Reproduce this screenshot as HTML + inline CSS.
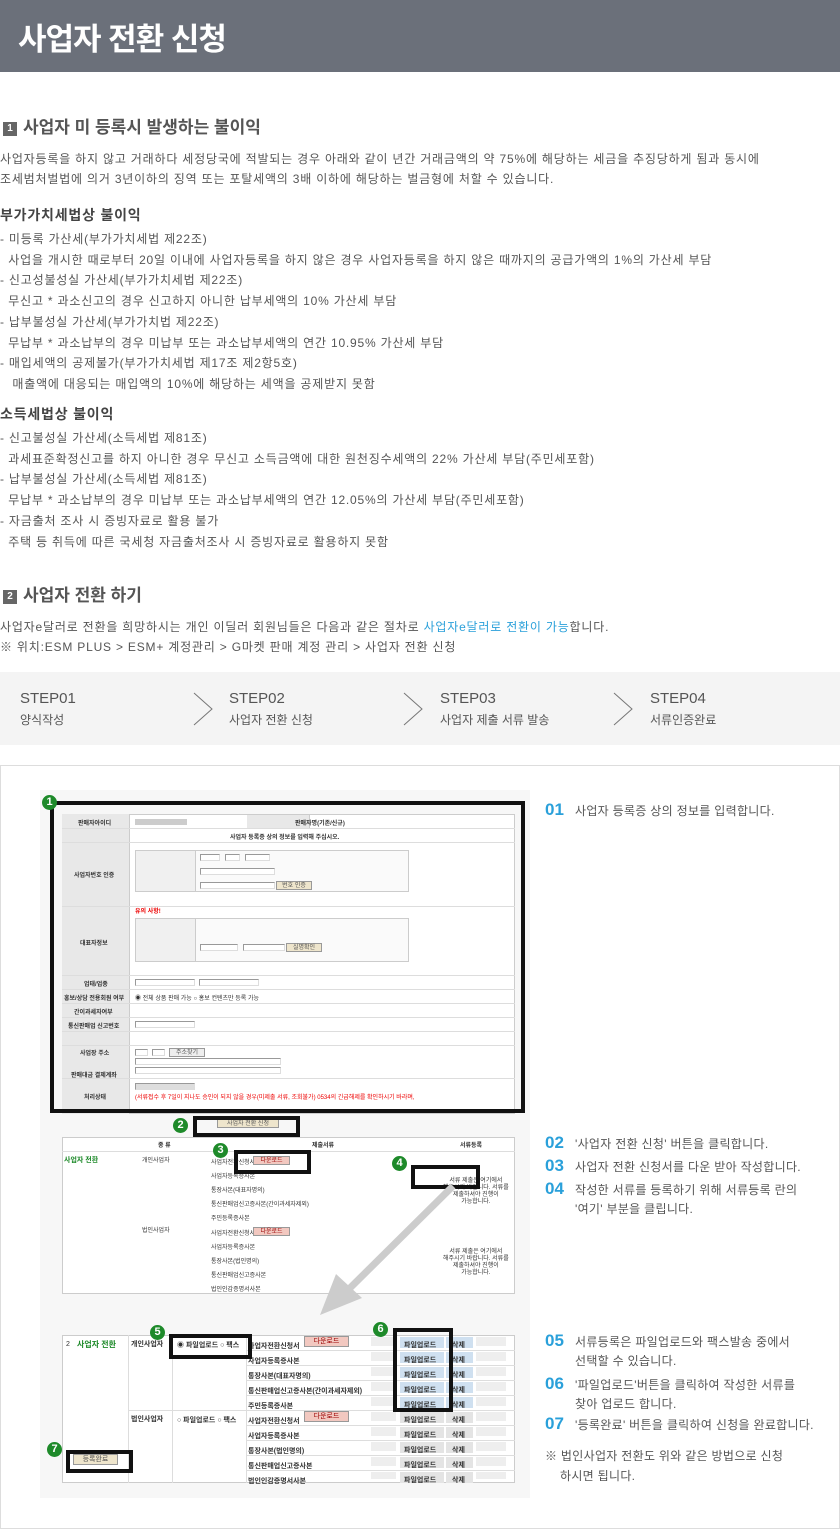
<!DOCTYPE html>
<html><head><meta charset="utf-8"><style>
*{margin:0;padding:0;box-sizing:border-box}
body{width:840px;height:1529px;position:relative;background:#fff;font-family:"Liberation Sans","Noto Sans CJK KR",sans-serif;color:#555;font-size:12px;overflow:hidden}
.a{position:absolute;white-space:nowrap}
.t{letter-spacing:.8px}
.hd{left:0;top:0;width:840px;height:72px;background:#6b707a}
.hd span{position:absolute;left:18px;top:14px;font-size:31px;font-weight:bold;color:#fff;letter-spacing:-1px}
.h2{font-size:17px;font-weight:bold;color:#555}
.num{display:inline-block;width:14px;height:14px;background:#666;color:#fff;font-size:10px;text-align:center;line-height:14px;margin-right:6px;vertical-align:2px}
.h3{font-size:14px;font-weight:bold;color:#444;letter-spacing:.8px}
.steps{left:0;top:672px;width:840px;height:73px;background:#f4f4f4}
.st{position:absolute;top:18px;color:#555}
.st b{display:block;font-weight:normal;font-size:15px;color:#555;margin-bottom:4px}
.chev{position:absolute;top:20px;width:20px;height:34px}
.box{left:0;top:765px;width:840px;height:764px;border:1px solid #ddd}
.img{left:40px;top:790px;width:490px;height:708px;background:#f7f7f7}
.bx{position:absolute;border:4px solid #111}
.circ{position:absolute;width:15px;height:15px;border-radius:50%;background:#1e8a2a;color:#fff;font-size:11px;font-weight:bold;text-align:center;line-height:15px}
.tb{position:absolute;background:#fff;border:1px solid #ccc}
.gr{position:absolute;background:#e8e8e8;border-right:1px solid #ccc}
.ln{position:absolute;height:1px;background:#ddd}
.sm{position:absolute;font-size:6px;color:#333;white-space:nowrap}
.rt{position:absolute;font-size:12px;color:#555;white-space:nowrap;letter-spacing:.3px}
.rt b{color:#2aa0da;font-size:17px;font-weight:bold;display:inline-block;width:30px;letter-spacing:0}
.btn{position:absolute;height:9px;border:1px solid #999;font-size:6px;text-align:center;line-height:8px}
.in{position:absolute;height:7px;border:1px solid #999;border-right-color:#ddd;border-bottom-color:#ddd;background:#fff}
</style></head><body>
<div class="a hd"><span>사업자 전환 신청</span></div>

<div class="a h2" style="left:3px;top:113px"><span class="num">1</span>사업자 미 등록시 발생하는 불이익</div>
<div class="a t" style="left:0;top:150px">사업자등록을 하지 않고 거래하다 세정당국에 적발되는 경우 아래와 같이 년간 거래금액의 약 75%에 해당하는 세금을 추징당하게 됨과 동시에</div>
<div class="a t" style="left:0;top:170px">조세범처벌법에 의거 3년이하의 징역 또는 포탈세액의 3배 이하에 해당하는 벌금형에 처할 수 있습니다.</div>

<div class="a h3" style="left:0;top:205px">부가가치세법상 불이익</div>
<div class="a t" style="left:0;top:229px;line-height:20.7px">- 미등록 가산세(부가가치세법 제22조)<br>&nbsp; 사업을 개시한 때로부터 20일 이내에 사업자등록을 하지 않은 경우 사업자등록을 하지 않은 때까지의 공급가액의 1%의 가산세 부담<br>- 신고성불성실 가산세(부가가치세법 제22조)<br>&nbsp; 무신고 * 과소신고의 경우 신고하지 아니한 납부세액의 10% 가산세 부담<br>- 납부불성실 가산세(부가가치법 제22조)<br>&nbsp; 무납부 * 과소납부의 경우 미납부 또는 과소납부세액의 연간 10.95% 가산세 부담<br>- 매입세액의 공제불가(부가가치세법 제17조 제2항5호)<br>&nbsp;&nbsp; 매출액에 대응되는 매입액의 10%에 해당하는 세액을 공제받지 못함</div>

<div class="a h3" style="left:0;top:404px">소득세법상 불이익</div>
<div class="a t" style="left:0;top:428px;line-height:20.7px">- 신고불성실 가산세(소득세법 제81조)<br>&nbsp; 과세표준확정신고를 하지 아니한 경우 무신고 소득금액에 대한 원천징수세액의 22% 가산세 부담(주민세포함)<br>- 납부불성실 가산세(소득세법 제81조)<br>&nbsp; 무납부 * 과소납부의 경우 미납부 또는 과소납부세액의 연간 12.05%의 가산세 부담(주민세포함)<br>- 자금출처 조사 시 증빙자료로 활용 불가<br>&nbsp; 주택 등 취득에 따른 국세청 자금출처조사 시 증빙자료로 활용하지 못함</div>

<div class="a h2" style="left:3px;top:581px"><span class="num">2</span>사업자 전환 하기</div>
<div class="a t" style="left:0;top:618px">사업자e달러로 전환을 희망하시는 개인 이딜러 회원님들은 다음과 같은 절차로 <span style="color:#2aa0da">사업자e달러로 전환이 가능</span>합니다.</div>
<div class="a t" style="left:0;top:638px">※ 위치:ESM PLUS &gt; ESM+ 계정관리 &gt; G마켓 판매 계정 관리 &gt; 사업자 전환 신청</div>

<div class="a steps">
<div class="st" style="left:20px"><b>STEP01</b>양식작성</div>
<svg class="chev" style="left:193px" viewBox="0 0 20 34"><path d="M1 1 L19 17 L1 33" fill="none" stroke="#777" stroke-width="1"/></svg>
<div class="st" style="left:229px"><b>STEP02</b>사업자 전환 신청</div>
<svg class="chev" style="left:403px" viewBox="0 0 20 34"><path d="M1 1 L19 17 L1 33" fill="none" stroke="#777" stroke-width="1"/></svg>
<div class="st" style="left:440px"><b>STEP03</b>사업자 제출 서류 발송</div>
<svg class="chev" style="left:613px" viewBox="0 0 20 34"><path d="M1 1 L19 17 L1 33" fill="none" stroke="#777" stroke-width="1"/></svg>
<div class="st" style="left:650px"><b>STEP04</b>서류인증완료</div>
</div>

<div class="a box"></div>
<div class="a img">
 <!-- form 1 -->
 <div class="tb" style="left:22px;top:24px;width:453px;height:300px"></div>
 <div class="gr" style="left:22px;top:24px;width:68px;height:300px"></div>
 <div class="gr" style="left:207px;top:25px;width:63px;height:13px"></div>
 <div class="ln" style="left:22px;top:38px;width:453px"></div>
 <div class="ln" style="left:22px;top:52px;width:453px"></div>
 <div class="ln" style="left:22px;top:116px;width:453px"></div>
 <div class="ln" style="left:22px;top:185px;width:453px"></div>
 <div class="ln" style="left:22px;top:199px;width:453px"></div>
 <div class="ln" style="left:22px;top:213px;width:453px"></div>
 <div class="ln" style="left:22px;top:227px;width:453px"></div>
 <div class="ln" style="left:22px;top:241px;width:453px"></div>
 <div class="ln" style="left:22px;top:255px;width:453px"></div>
 <div class="ln" style="left:22px;top:288px;width:453px"></div>
 <div class="tb" style="left:95px;top:60px;width:274px;height:42px;background:#fafafa"></div>
 <div class="gr" style="left:96px;top:61px;width:60px;height:40px;background:#f0f0f0"></div>
 <div class="tb" style="left:95px;top:128px;width:274px;height:44px;background:#fafafa"></div>
 <div class="gr" style="left:96px;top:129px;width:60px;height:42px;background:#f0f0f0"></div>
 <div class="in" style="left:160px;top:64px;width:20px"></div><div class="in" style="left:185px;top:64px;width:15px"></div><div class="in" style="left:205px;top:64px;width:25px"></div>
 <div class="in" style="left:160px;top:78px;width:75px"></div><div class="in" style="left:160px;top:92px;width:75px"></div>
 <div class="btn" style="left:236px;top:91px;width:36px;background:#eee5cc">번호 인증</div>
 <div class="in" style="left:160px;top:154px;width:38px"></div><div class="in" style="left:203px;top:154px;width:42px"></div>
 <div class="btn" style="left:246px;top:153px;width:36px;background:#eee5cc">실명확인</div>
 <div class="in" style="left:95px;top:189px;width:60px"></div><div class="in" style="left:159px;top:189px;width:60px"></div>
 <div class="in" style="left:95px;top:231px;width:60px"></div>
 <div class="in" style="left:95px;top:259px;width:13px"></div><div class="in" style="left:112px;top:259px;width:13px"></div>
 <div class="btn" style="left:129px;top:258px;width:36px;background:#eee">주소찾기</div>
 <div class="in" style="left:95px;top:268px;width:146px"></div><div class="in" style="left:95px;top:277px;width:146px"></div>
 <div class="in" style="left:95px;top:293px;width:60px;background:#ddd"></div>
 <div class="sm" style="left:38px;top:28px;font-weight:bold">판매자아이디</div>
 <div class="sm" style="left:255px;top:28px;font-weight:bold">판매자명(기존/신규)</div>
 <div class="sm" style="left:190px;top:42px;font-weight:bold">사업자 등록증 상의 정보를 입력해 주십시오.</div>
 <div class="sm" style="left:34px;top:80px;font-weight:bold">사업자번호 인증</div>
 <div class="sm" style="left:40px;top:148px;font-weight:bold">대표자정보</div>
 <div class="sm" style="left:44px;top:189px;font-weight:bold">업태/업종</div>
 <div class="sm" style="left:24px;top:203px;font-weight:bold">홍보/상담 전용회원 여부</div>
 <div class="sm" style="left:34px;top:217px;font-weight:bold">간이과세자여부</div>
 <div class="sm" style="left:28px;top:231px;font-weight:bold">통신판매업 신고번호</div>
 <div class="sm" style="left:40px;top:258px;font-weight:bold">사업장 주소</div>
 <div class="sm" style="left:31px;top:280px;font-weight:bold">판매대금 결제계좌</div>
 <div class="sm" style="left:44px;top:302px;font-weight:bold">처리상태</div>
 <div class="sm" style="left:95px;top:116px;color:#e00;font-weight:bold">유의 사항!</div>
 <div class="sm" style="left:95px;top:203px">◉ 전체 상품 판매 가능 ○ 홍보 컨텐츠만 등록 가능</div>
 <div class="sm" style="left:95px;top:302px;color:#e00">(서류접수 후 7일이 지나도 승인이 되지 않을 경우(미제출 서류, 조회불가) 0534의 긴급해제를 확인하시기 바라며,</div>
 <div class="gr" style="left:95px;top:29px;width:52px;height:6px;background:#ccc"></div>
 <div class="bx" style="left:10px;top:11px;width:475px;height:312px"></div>
 <div class="circ" style="left:2px;top:5px">1</div>
 <!-- button 2 -->
 <div class="btn" style="left:177px;top:329px;width:62px;background:#eee5cc">사업자 전환 신청</div>
 <div class="bx" style="left:153px;top:326px;width:107px;height:21px"></div>
 <div class="circ" style="left:133px;top:328px">2</div>
 <!-- table 2 -->
 <div class="tb" style="left:22px;top:347px;width:453px;height:157px"></div>
 <div class="ln" style="left:22px;top:361px;width:453px"></div>
 <div class="sm" style="left:118px;top:350px;font-weight:bold">종 류</div>
 <div class="sm" style="left:272px;top:350px;font-weight:bold">제출서류</div>
 <div class="sm" style="left:420px;top:350px;font-weight:bold">서류등록</div>
 <div class="sm" style="left:24px;top:365px;color:#1e8a2a;font-weight:bold;font-size:7px">사업자 전환</div>
 <div class="sm" style="left:102px;top:365px">개인사업자</div>
 <div class="sm" style="left:102px;top:435px">법인사업자</div>
 <div class="sm" style="left:171px;top:366px;line-height:14px">사업자전환신청서<br>사업자등록증사본<br>통장사본(대표자명의)<br>통신판매업신고증사본(간이과세자제외)<br>주민등록증사본</div>
 <div class="sm" style="left:171px;top:437px;line-height:14px">사업자전환신청서<br>사업자등록증사본<br>통장사본(법인명의)<br>통신판매업신고증사본<br>법인인감증명서사본</div>
 <div class="btn" style="left:213px;top:366px;width:37px;background:#f2c8c0;color:#900">다운로드</div>
 <div class="btn" style="left:213px;top:437px;width:37px;background:#f2c8c0;color:#900">다운로드</div>
 <div class="sm" style="left:403px;top:388px;text-align:center;line-height:7px">서류 제출은 여기에서<br>해주시기 바랍니다. 서류를<br>제출하셔야 진행이<br>가능합니다.</div>
 <div class="sm" style="left:403px;top:459px;text-align:center;line-height:7px">서류 제출은 여기에서<br>해주시기 바랍니다. 서류를<br>제출하셔야 진행이<br>가능합니다.</div>
 <div class="bx" style="left:194px;top:360px;width:77px;height:24px"></div>
 <div class="circ" style="left:173px;top:353px">3</div>
 <div class="bx" style="left:371px;top:375px;width:69px;height:24px"></div>
 <div class="circ" style="left:352px;top:366px">4</div>
 <svg style="position:absolute;left:270px;top:390px" width="150" height="140" viewBox="0 0 150 140"><path d="M143 6 L40 108" stroke="#ccc" stroke-width="7"/><path d="M10 135 L26 94 L52 118 Z" fill="#ccc"/></svg>
 <!-- table 3 -->
 <div class="tb" style="left:22px;top:545px;width:453px;height:148px"></div>
 <div class="ln" style="left:206px;top:560px;width:269px"></div>
 <div class="ln" style="left:206px;top:575px;width:269px"></div>
 <div class="ln" style="left:206px;top:590px;width:269px"></div>
 <div class="ln" style="left:206px;top:605px;width:269px"></div>
 <div class="ln" style="left:88px;top:620px;width:387px"></div>
 <div class="ln" style="left:206px;top:635px;width:269px"></div>
 <div class="ln" style="left:206px;top:650px;width:269px"></div>
 <div class="ln" style="left:206px;top:665px;width:269px"></div>
 <div class="ln" style="left:206px;top:680px;width:269px"></div>
 <div style="position:absolute;left:88px;top:545px;width:1px;height:148px;background:#ddd"></div>
 <div style="position:absolute;left:132px;top:545px;width:1px;height:148px;background:#ddd"></div>
 <div style="position:absolute;left:206px;top:545px;width:1px;height:148px;background:#ddd"></div>
 <div class="sm" style="left:26px;top:551px;font-size:7px">2</div>
 <div class="sm" style="left:37px;top:549px;color:#1e8a2a;font-weight:bold;font-size:8px">사업자 전환</div>
 <div class="sm" style="left:91px;top:549px;font-weight:bold;font-size:7px">개인사업자</div>
 <div class="sm" style="left:91px;top:624px;font-weight:bold;font-size:7px">법인사업자</div>
 <div class="sm" style="left:137px;top:550px;font-size:7px;font-weight:bold">◉ 파일업로드 ○ 팩스</div>
 <div class="sm" style="left:137px;top:625px;font-size:7px;font-weight:bold">○ 파일업로드 ○ 팩스</div>
 <div class="sm" style="left:208px;top:549px;font-size:7px;font-weight:bold;line-height:15px">사업자전환신청서<br>사업자등록증사본<br>통장사본(대표자명의)<br>통신판매업신고증사본(간이과세자제외)<br>주민등록증사본<br>사업자전환신청서<br>사업자등록증사본<br>통장사본(법인명의)<br>통신판매업신고증사본<br>법인인감증명서사본</div>
 <div class="btn" style="left:264px;top:546px;width:45px;height:11px;background:#f2c8c0;color:#900;font-size:7px;line-height:10px">다운로드</div>
 <div class="btn" style="left:264px;top:621px;width:45px;height:11px;background:#f2c8c0;color:#900;font-size:7px;line-height:10px">다운로드</div>
 <div style="position:absolute;left:331px;top:547px;width:25px;height:142px;background:repeating-linear-gradient(#eee 0 9px,transparent 9px 15px)"></div>
 <div style="position:absolute;left:360px;top:547px;width:44px;height:75px;background:repeating-linear-gradient(#cfe0f0 0 11px,transparent 11px 15px)"></div>
 <div style="position:absolute;left:406px;top:547px;width:27px;height:75px;background:repeating-linear-gradient(#cfe0f0 0 11px,transparent 11px 15px)"></div>
 <div style="position:absolute;left:360px;top:622px;width:44px;height:71px;background:repeating-linear-gradient(#e4e4e4 0 11px,transparent 11px 15px)"></div>
 <div style="position:absolute;left:406px;top:622px;width:27px;height:71px;background:repeating-linear-gradient(#e4e4e4 0 11px,transparent 11px 15px)"></div>
 <div style="position:absolute;left:436px;top:547px;width:30px;height:142px;background:repeating-linear-gradient(#eee 0 9px,transparent 9px 15px)"></div>
 <div class="sm" style="left:364px;top:548px;font-size:7px;font-weight:bold;line-height:15px">파일업로드<br>파일업로드<br>파일업로드<br>파일업로드<br>파일업로드<br>파일업로드<br>파일업로드<br>파일업로드<br>파일업로드<br>파일업로드</div>
 <div class="sm" style="left:412px;top:548px;font-size:7px;font-weight:bold;line-height:15px">삭제<br>삭제<br>삭제<br>삭제<br>삭제<br>삭제<br>삭제<br>삭제<br>삭제<br>삭제</div>
 <div class="bx" style="left:129px;top:544px;width:83px;height:25px"></div>
 <div class="circ" style="left:110px;top:535px">5</div>
 <div class="bx" style="left:353px;top:538px;width:60px;height:84px"></div>
 <div class="circ" style="left:333px;top:532px">6</div>
 <div class="btn" style="left:33px;top:664px;width:45px;height:11px;background:#eee5cc;font-size:7px;line-height:10px">등록완료</div>
 <div class="bx" style="left:26px;top:660px;width:67px;height:23px"></div>
 <div class="circ" style="left:7px;top:652px">7</div>
</div>

<div class="rt" style="left:545px;top:800px"><b>01</b>사업자 등록증 상의 정보를 입력합니다.</div>
<div class="rt" style="left:545px;top:1133px"><b>02</b>'사업자 전환 신청' 버튼을 클릭합니다.</div>
<div class="rt" style="left:545px;top:1156px"><b>03</b>사업자 전환 신청서를 다운 받아 작성합니다.</div>
<div class="rt" style="left:545px;top:1179px"><b>04</b>작성한 서류를 등록하기 위해 서류등록 란의</div>
<div class="rt" style="left:575px;top:1200px">'여기' 부분을 클립니다.</div>
<div class="rt" style="left:545px;top:1331px"><b>05</b>서류등록은 파일업로드와 팩스발송 중에서</div>
<div class="rt" style="left:575px;top:1352px">선택할 수 있습니다.</div>
<div class="rt" style="left:545px;top:1374px"><b>06</b>'파일업로드'버튼을 클릭하여 작성한 서류를</div>
<div class="rt" style="left:575px;top:1395px">찾아 업로드 합니다.</div>
<div class="rt" style="left:545px;top:1414px"><b>07</b>'등록완료' 버튼을 클릭하여 신청을 완료합니다.</div>
<div class="rt" style="left:545px;top:1447px">※ 법인사업자 전환도 위와 같은 방법으로 신청</div>
<div class="rt" style="left:560px;top:1467px">하시면 됩니다.</div>
</body></html>
